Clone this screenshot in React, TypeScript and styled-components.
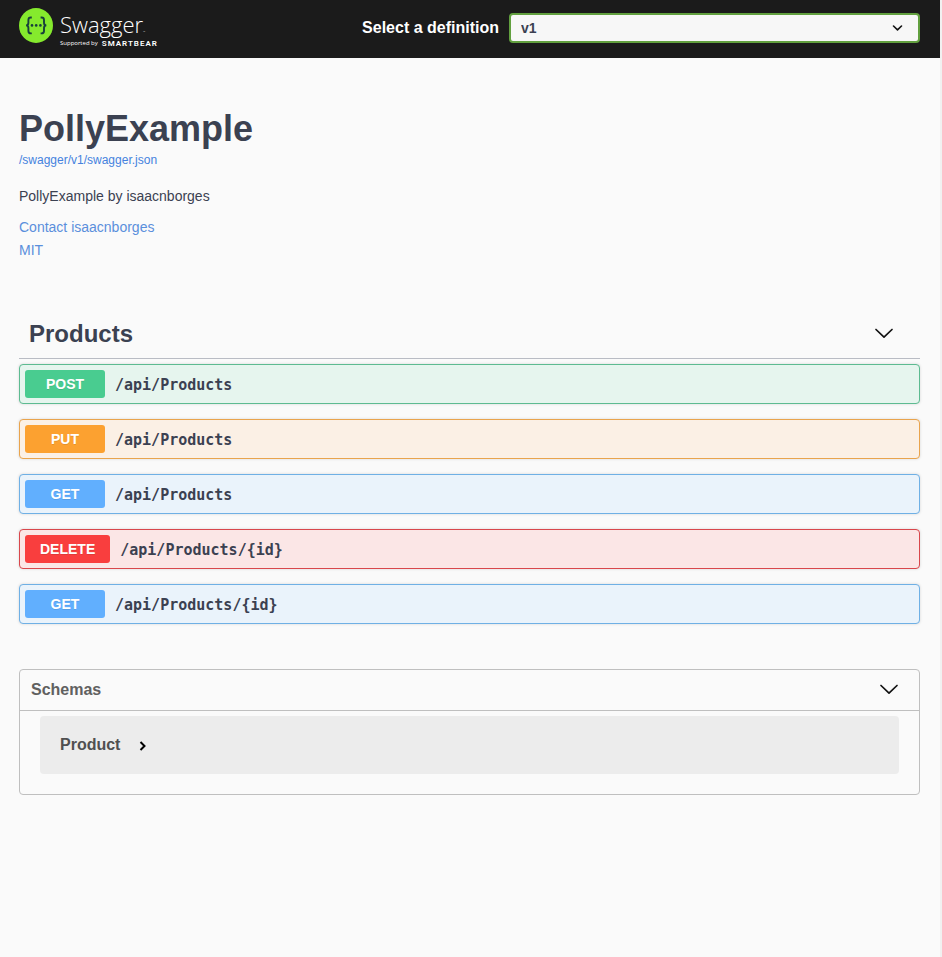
import React from "react";
import styled, { createGlobalStyle } from "styled-components";

const GlobalStyle = createGlobalStyle`
  *, *::before, *::after { box-sizing: border-box; }
  body {
    margin: 0;
    background: #fafafa;
    color: #3b4151;
    font-family: "Liberation Sans", Arial, sans-serif;
  }
`;

const Page = styled.div`
  min-height: 100vh;
  border-right: 2px solid #f1f1f1;
`;

const Topbar = styled.header`
  display: flex;
  align-items: flex-start;
  justify-content: space-between;
  height: 58px;
  padding: 8px 20px 0 19px;
  background: #1b1b1b;
`;

const Logo = styled.a`
  display: flex;
  gap: 7px;
  color: #fff;
  text-decoration: none;
  font-family: "Open Sans", "Noto Sans", sans-serif;
`;

const LogoWords = styled.span`
  display: flex;
  flex-direction: column;
  padding-top: 2px;
`;

const Wordmark = styled.span`
  display: flex;
  align-items: flex-end;
  height: 28px;
  font-size: 22px;
  font-weight: 300;
  line-height: 28px;
`;

const Trademark = styled.small`
  font-size: 3px;
  line-height: 12px;
`;

const Tagline = styled.span`
  display: flex;
  align-items: center;
  gap: 4px;
  font-size: 6px;
  line-height: 11px;
`;

const Company = styled.strong`
  font-family: Roboto, sans-serif;
  font-size: 8px;
  font-weight: 600;
  letter-spacing: 1px;
`;

const Definition = styled.div`
  display: flex;
  align-items: center;
  gap: 10px;
  padding-top: 5px;
`;

const DefinitionLabel = styled.label`
  color: #fff;
  font-size: 16px;
  font-weight: 700;
`;

const SelectWrap = styled.div`
  position: relative;
  width: 44vw;
  max-width: 411px;

  svg {
    position: absolute;
    top: 11px;
    right: 17px;
    pointer-events: none;
  }
`;

const Select = styled.select`
  display: block;
  appearance: none;
  width: 100%;
  height: 30px;
  padding: 0 40px 0 10px;
  border: 2px solid #62a03f;
  border-radius: 4px;
  background: #f7f7f7;
  color: #3b4151;
  font-family: inherit;
  font-size: 14px;
  font-weight: 700;
`;

const Content = styled.main`
  padding: 50px 20px 40px 19px;
`;

const Info = styled.section`
  display: flex;
  flex-direction: column;
  align-items: flex-start;
  font-size: 14px;
  line-height: 16px;
`;

const Title = styled.h1`
  margin: 0;
  font-size: 36px;
  line-height: 42px;
`;

const Link = styled.a<{ $small?: boolean }>`
  color: #5a8fdc;
  font-size: ${(p) => (p.$small ? "12px" : "14px")};
  line-height: ${(p) => (p.$small ? "20px" : "23px")};
  text-decoration: none;
`;

const SpecLink = styled(Link)`
  color: #4582de;
`;

const Description = styled.p`
  margin: 18px 0 12px;
`;

const TagHeader = styled.h2`
  margin: 47px 0 5px;
  border-bottom: 1px solid #b9bcc4;
`;

const TagButton = styled.button`
  display: flex;
  align-items: center;
  justify-content: space-between;
  width: 100%;
  height: 49px;
  padding: 0 26px 0 10px;
  border: 0;
  background: none;
  color: #3b4151;
  font: 700 24px "Liberation Sans", Arial, sans-serif;
`;

const Operations = styled.div`
  display: flex;
  flex-direction: column;
  gap: 15px;
`;

const Operation = styled.button<{ $color: string; $tint: string }>`
  display: flex;
  align-items: center;
  gap: 10px;
  width: 100%;
  height: 40px;
  padding: 5px;
  border: 1px solid ${(p) => p.$color};
  border-radius: 4px;
  background: ${(p) => p.$tint};
  box-shadow: 0 0 3px rgba(0, 0, 0, 0.15);
  color: #3b4151;
`;

const Method = styled.span<{ $color: string }>`
  min-width: 80px;
  padding: 0 15px;
  border-radius: 3px;
  background: ${(p) => p.$color};
  color: #fff;
  font: 700 14px/28px "Liberation Sans", Arial, sans-serif;
  text-align: center;
  text-shadow: 0 1px 0 rgba(0, 0, 0, 0.1);
`;

const Path = styled.span`
  padding-top: 2px;
  font: 700 15px/20px Consolas, "DejaVu Sans Mono", monospace;
`;

const Schemas = styled.section`
  margin-top: 45px;
  padding-bottom: 20px;
  border: 1px solid #bfbfbf;
  border-radius: 4px;
`;

const SchemasHeader = styled.h3`
  margin: 0 0 5px;
  border-bottom: 1px solid #bfbfbf;
`;

const SchemasButton = styled.button`
  display: flex;
  align-items: center;
  justify-content: space-between;
  width: 100%;
  height: 40px;
  padding: 0 20px 0 11px;
  border: 0;
  background: none;
  color: #606060;
  font: 700 16px "Liberation Sans", Arial, sans-serif;
`;

const Model = styled.div`
  margin: 0 20px;
  padding: 19px 20px;
  border-radius: 4px;
  background: #ececec;
`;

const ModelButton = styled.button`
  display: flex;
  align-items: center;
  gap: 19px;
  height: 20px;
  padding: 0;
  border: 0;
  background: none;
  color: #505050;
  font: 700 16px "Liberation Sans", Arial, sans-serif;

  svg {
    margin-top: 2px;
  }
`;

const operations = [
  { method: "POST", path: "/api/Products", color: "#49cc90", border: "#5dbb91", tint: "#e6f5ee" },
  { method: "PUT", path: "/api/Products", color: "#fca130", border: "#e9a44d", tint: "#fbf0e5" },
  { method: "GET", path: "/api/Products", color: "#61affe", border: "#6fb0e5", tint: "#eaf3fb" },
  { method: "DELETE", path: "/api/Products/{id}", color: "#f93e3e", border: "#d9474c", tint: "#fbe6e6" },
  { method: "GET", path: "/api/Products/{id}", color: "#61affe", border: "#6fb0e5", tint: "#eaf3fb" },
];

const SwaggerMark = () => (
  <svg width="34" height="35" viewBox="0 0 34 35" aria-hidden="true">
    <ellipse cx="17" cy="17.5" rx="17" ry="17.4" fill="#85ea2d" />
    <g fill="none" stroke="#17403c" strokeWidth="1.9">
      <path d="M12.8 9.5h-1c-1.8 0-2.4.8-2.4 2.4v2.8c0 1.7-.6 2.6-2.3 2.7 1.7.1 2.3 1 2.3 2.7V23c0 1.7.6 2.4 2.4 2.4h1" />
      <path d="M21.6 9.5h1c1.8 0 2.4.8 2.4 2.4v2.8c0 1.7.6 2.6 2.3 2.7-1.7.1-2.3 1-2.3 2.7V23c0 1.7-.6 2.4-2.4 2.4h-1" />
    </g>
    <g fill="#17403c">
      <circle cx="13" cy="17.4" r="1.3" />
      <circle cx="17.2" cy="17.4" r="1.3" />
      <circle cx="21.4" cy="17.4" r="1.3" />
    </g>
  </svg>
);

const WideChevron = () => (
  <svg width="20" height="12" viewBox="0 0 20 12" fill="none" aria-hidden="true">
    <path d="M2 1.5 10 9.2l8-7.7" stroke="#111" strokeWidth="1.7" strokeLinecap="round" strokeLinejoin="round" />
  </svg>
);

export default function App() {
  return (
    <Page>
      <GlobalStyle />
      <Topbar>
        <Logo href="#" aria-label="Swagger, supported by SmartBear">
          <SwaggerMark />
          <LogoWords>
            <Wordmark>
              Swagger<Trademark>™</Trademark>
            </Wordmark>
            <Tagline>
              Supported by <Company>SMARTBEAR</Company>
            </Tagline>
          </LogoWords>
        </Logo>
        <Definition>
          <DefinitionLabel htmlFor="definition">Select a definition</DefinitionLabel>
          <SelectWrap>
            <Select id="definition" defaultValue="v1">
              <option value="v1">v1</option>
            </Select>
            <svg width="11" height="8" viewBox="0 0 11 8" fill="none" aria-hidden="true">
              <path d="m1.5 2 4 3.8 4-3.8" stroke="#111" strokeWidth="1.6" strokeLinecap="round" strokeLinejoin="round" />
            </svg>
          </SelectWrap>
        </Definition>
      </Topbar>
      <Content>
        <Info>
          <Title>PollyExample</Title>
          <SpecLink $small href="#spec">/swagger/v1/swagger.json</SpecLink>
          <Description>PollyExample by isaacnborges</Description>
          <Link href="#contact">Contact isaacnborges</Link>
          <Link href="#license">MIT</Link>
        </Info>
        <TagHeader>
          <TagButton type="button" aria-expanded="true">
            Products
            <WideChevron />
          </TagButton>
        </TagHeader>
        <Operations>
          {operations.map((op) => (
            <Operation key={op.method + op.path} type="button" $color={op.border} $tint={op.tint}>
              <Method $color={op.color}>{op.method}</Method>
              <Path>{op.path}</Path>
            </Operation>
          ))}
        </Operations>
        <Schemas>
          <SchemasHeader>
            <SchemasButton type="button" aria-expanded="true">
              Schemas
              <WideChevron />
            </SchemasButton>
          </SchemasHeader>
          <Model>
            <ModelButton type="button" aria-expanded="false">
              Product
              <svg width="8" height="10" viewBox="0 0 8 10" fill="none" aria-hidden="true">
                <path d="m1.5 1 4 4-4 4" stroke="#000" strokeWidth="2" />
              </svg>
            </ModelButton>
          </Model>
        </Schemas>
      </Content>
    </Page>
  );
}
